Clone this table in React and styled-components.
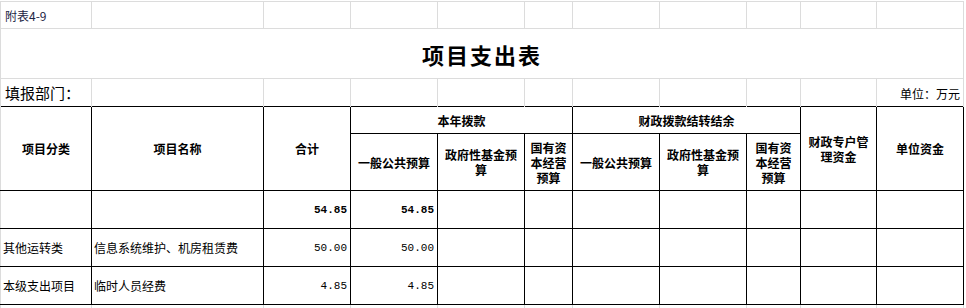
import React from "react";
import styled, { createGlobalStyle } from "styled-components";

const GRID = "#dcdcdc";

const GlobalStyle = createGlobalStyle`
  html, body {
    margin: 0;
    padding: 0;
    background: #ffffff;
  }
  body {
    font-family: "Noto Sans CJK SC", "Noto Sans", sans-serif;
    color: #000000;
  }
`;

const Sheet = styled.table`
  border-collapse: collapse;
  table-layout: fixed;
  width: 963px;
  margin-top: 1px;
`;

const Row = styled.tr`
  height: ${(p) => p.$h}px;
`;

const Blank = styled.td`
  border: 1px solid ${GRID};
  border-bottom: ${(p) => (p.$open ? "none" : `1px solid ${GRID}`)};
  padding: 0 4px;
  vertical-align: bottom;
  font-size: 12px;
  line-height: 14px;
  white-space: nowrap;
`;

const Note = styled(Blank)`
  color: #1c2444;
  padding-bottom: 5px;
`;

const Dept = styled(Blank)`
  font-size: 15px;
  line-height: 18px;
  padding-bottom: 4px;
`;

const Unit = styled(Blank)`
  text-align: right;
  padding-bottom: 5px;
  padding-right: 3px;
`;

const TitleCell = styled.td`
  border: 1px solid ${GRID};
  text-align: center;
  vertical-align: middle;
  font-size: 22px;
  font-weight: 600;
  letter-spacing: 2px;
  padding-top: 2px;
`;

const HeadCell = styled.th`
  border: 1px solid #000000;
  border-left-color: ${(p) => (p.$edge ? GRID : "#000000")};
  padding: 0 1px;
  text-align: center;
  vertical-align: middle;
  font-size: 12px;
  line-height: 15px;
  font-weight: 700;
  white-space: nowrap;
`;

const TextCell = styled.td`
  border: 1px solid #000000;
  border-left-color: ${(p) => (p.$edge ? GRID : "#000000")};
  padding: 0 2px;
  vertical-align: middle;
  font-size: 12px;
  line-height: 14px;
  white-space: nowrap;
`;

const NumCell = styled(TextCell)`
  text-align: right;
  font-family: "Liberation Mono", "DejaVu Sans Mono", monospace;
  font-size: 11px;
  font-weight: ${(p) => (p.$bold ? 700 : 400)};
  padding-right: 3px;
`;

const widths = [91, 172, 87, 87, 87, 48, 87, 87, 54, 76, 87];

const rows = [
  { kind: "", name: "", total: "54.85", general: "54.85", bold: true },
  { kind: "其他运转类", name: "信息系统维护、机房租赁费", total: "50.00", general: "50.00" },
  { kind: "本级支出项目", name: "临时人员经费", total: "4.85", general: "4.85" },
];

const emptyCols = (n, open) =>
  Array.from({ length: n }, (_, i) => <Blank key={i} $open={open} />);

export default function App() {
  return (
    <>
      <GlobalStyle />
      <Sheet>
        <colgroup>
          {widths.map((w, i) => (
            <col key={i} style={{ width: w }} />
          ))}
        </colgroup>
        <tbody>
          <Row $h={27}>
            <Note>附表4-9</Note>
            {emptyCols(10)}
          </Row>
          <Row $h={50}>
            <TitleCell colSpan={11}>项目支出表</TitleCell>
          </Row>
          <Row $h={28}>
            <Dept $open>填报部门：</Dept>
            {emptyCols(9, true)}
            <Unit $open>单位：万元</Unit>
          </Row>
          <Row $h={27}>
            <HeadCell $edge rowSpan={2}>项目分类</HeadCell>
            <HeadCell rowSpan={2}>项目名称</HeadCell>
            <HeadCell rowSpan={2}>合计</HeadCell>
            <HeadCell colSpan={3}>本年拨款</HeadCell>
            <HeadCell colSpan={3}>财政拨款结转结余</HeadCell>
            <HeadCell rowSpan={2}>
              财政专户管
              <br />
              理资金
            </HeadCell>
            <HeadCell rowSpan={2}>单位资金</HeadCell>
          </Row>
          <Row $h={57}>
            <HeadCell>一般公共预算</HeadCell>
            <HeadCell>
              政府性基金预
              <br />算
            </HeadCell>
            <HeadCell>
              国有资
              <br />
              本经营
              <br />
              预算
            </HeadCell>
            <HeadCell>一般公共预算</HeadCell>
            <HeadCell>
              政府性基金预
              <br />算
            </HeadCell>
            <HeadCell>
              国有资
              <br />
              本经营
              <br />
              预算
            </HeadCell>
          </Row>
          {rows.map((r, i) => (
            <Row $h={38} key={i}>
              <TextCell $edge>{r.kind}</TextCell>
              <TextCell>{r.name}</TextCell>
              <NumCell $bold={r.bold}>{r.total}</NumCell>
              <NumCell $bold={r.bold}>{r.general}</NumCell>
              {Array.from({ length: 7 }, (_, j) => (
                <TextCell key={j} />
              ))}
            </Row>
          ))}
          <Row $h={20}>{emptyCols(11)}</Row>
        </tbody>
      </Sheet>
    </>
  );
}
